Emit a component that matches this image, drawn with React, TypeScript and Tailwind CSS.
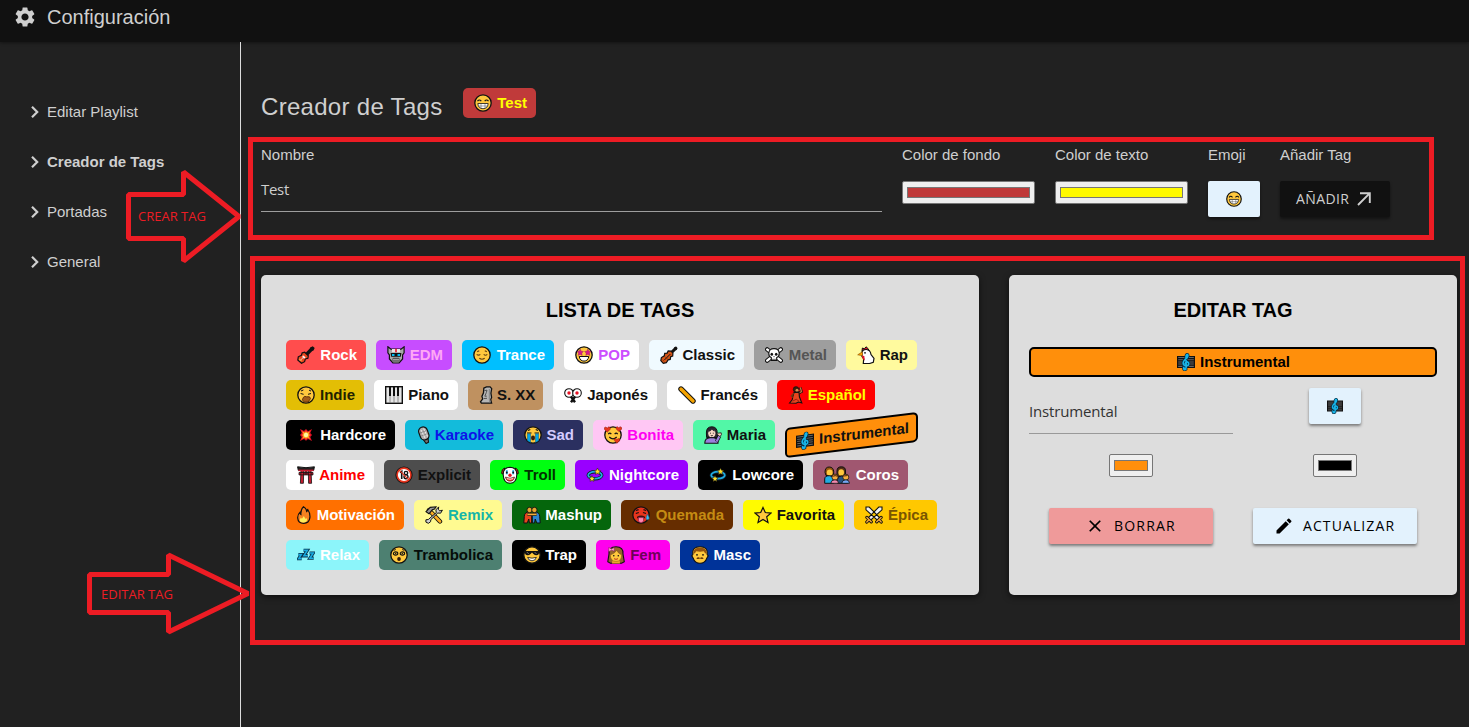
import React from "react";
import { MdSettings, MdClose, MdEdit } from "react-icons/md";

const K = "#111";
const Y = "#ffc83d";

function Face({ color = Y, children }: { color?: string; children?: React.ReactNode }) {
  return (
    <>
      <circle cx="9" cy="9" r="8.2" fill={color} stroke={K} strokeWidth="1.3" />
      {children}
    </>
  );
}

const GLYPHS: Record<string, React.ReactNode> = {
  grin: (
    <Face>
      <path d="M3.5 7.2q1.8-2.4 3.8 0M10.7 7.2q1.8-2.4 3.8 0" fill="none" stroke={K} strokeWidth="1.2" />
      <path d="M3.8 9.5h10.4q-.6 5.2-5.2 5.2T3.8 9.5z" fill="#fff" stroke={K} strokeWidth=".8" />
      <path d="M4.3 12h9.4M7 9.7v4.6M11 9.7v4.6" stroke="#444" strokeWidth=".5" />
    </Face>
  ),
  guitar: (
    <>
      <path d="M9 9L15.2 2.5" stroke={K} strokeWidth="3.4" />
      <path d="M13.3 1.5l2.4-1.3 2 1.8-1.2 2.6-2.2.3-1.6-1.5z" fill={K} />
      <path d="M5.2 6.8l2.5-.6 3.6 3.5-.4 2.6-2.6.7-.7 2.7-3.1 1.6L.8 14l.5-3.2 3.1-1.5z" fill="#e8461e" stroke={K} strokeWidth="1.2" />
      <path d="M6 9.3l2.8 2.6-2 .5L5.3 11z" fill="#fff" />
      <path d="M3 14.7l4.5-4.5" stroke="#ddd" strokeWidth=".9" />
      <path d="M2.3 12.8l2.3 2.3" stroke="#ff9d3b" strokeWidth="1.2" />
    </>
  ),
  robot: (
    <>
      <path d="M.9.8L4 3.2h10L17.1.8v6L15.6 9v4l-3.5 4H5.9l-3.5-4V9L.9 6.8z" fill="#a8a8a8" stroke={K} strokeWidth="1.2" />
      <path d="M5 3h8v3.2H5z" fill="#e8e8e8" />
      <path d="M9 2.8v3.4" stroke="#e81224" strokeWidth="1.6" />
      <path d="M3.6 7h10.8l-.6 3.8H4.2z" fill={K} />
      <path d="M5 8.9h2.5M10.5 8.9H13" stroke="#00bcf2" strokeWidth="2" />
      <path d="M6 12.3h6v2.7H6z" fill="#eee" stroke={K} strokeWidth=".7" />
      <path d="M8 12.3V15M10 12.3V15" stroke={K} strokeWidth=".7" />
    </>
  ),
  relieved: (
    <Face>
      <path d="M3.7 8.3q1.8 1.8 3.6 0M10.7 8.3q1.8 1.8 3.6 0M6.3 12.3q2.7 1.8 5.4 0M4.2 5.8l2-1M13.8 5.8l-2-1" fill="none" stroke="#604010" strokeWidth="1.1" />
    </Face>
  ),
  starstruck: (
    <Face>
      <path d="M5.2 3.2l1 2 2.2.3-1.6 1.6.4 2.3-2-1.1-2 1.1.4-2.3L2 5.5l2.2-.3zM12.8 3.2l1 2 2.2.3-1.6 1.6.4 2.3-2-1.1-2 1.1.4-2.3-1.6-1.6 2.2-.3z" fill="#d8178a" stroke="#8b0b58" strokeWidth=".4" />
      <path d="M4.2 10.5h9.6q-.8 4.6-4.8 4.6t-4.8-4.6z" fill="#fff" stroke={K} strokeWidth="1" />
    </Face>
  ),
  violin: (
    <>
      <path d="M9 9l7.4-7.4" stroke={K} strokeWidth="3" />
      <path d="M13.8 1.7l2.4-1.1 1.3 1.3-1 2.3z" fill={K} />
      <path d="M8.2 4.9l2.8.2 1.9 2-.2 3-2 .7-.5 2.6-2.1.5-1.8 2.8-3 .6L.8 14.6l.6-3 2.9-1.8.4-2.4 2.4-.3z" fill="#d45416" stroke={K} strokeWidth="1.2" />
      <path d="M4.4 14l6-6" stroke={K} strokeWidth="1" />
      <path d="M5 10.6l2.6 2.7M2.7 13.8l1.4 1.5" stroke="#7a2b08" strokeWidth=".8" />
    </>
  ),
  skull: (
    <>
      <path d="M2.2 3.4l13.6 11.2M15.8 3.4L2.2 14.6" stroke={K} strokeWidth="4.4" strokeLinecap="round" />
      <path d="M2.2 3.4l13.6 11.2M15.8 3.4L2.2 14.6" stroke="#fff" strokeWidth="2.4" strokeLinecap="round" />
      <path d="M9 2.6q5.2 0 5.2 5 0 3.2-2.5 4v2.8H6.3v-2.8q-2.5-.8-2.5-4 0-5 5.2-5z" fill="#fff" stroke={K} strokeWidth="1.1" />
      <ellipse cx="6.8" cy="8.2" rx="1.3" ry="1.5" fill={K} />
      <ellipse cx="11.2" cy="8.2" rx="1.3" ry="1.5" fill={K} />
      <path d="M9 10v1.2M8 12.7v1.6M10 12.7v1.6" stroke={K} strokeWidth=".8" />
    </>
  ),
  chicken: (
    <>
      <path d="M5 5l.4-3 2 .8L9 .8l1.9 1.6 1.4 2.4z" fill="#e81224" stroke={K} strokeWidth="1" />
      <path d="M4.8 6.2Q6 3.3 9.4 3.5q3.9.3 4.6 5l3 3.8-.7 4-3.8 1.2H6.3l.4-4.9-1.7-2z" fill="#fff" stroke={K} strokeWidth="1.2" />
      <path d="M5.4 5.8L.7 8.8l4.9 1z" fill="#ffa500" stroke="#8a4b00" strokeWidth=".6" />
      <path d="M5 9.8l2.3.2.5 4.4q-2.6-.6-2.8-4.6z" fill="#e81224" />
      <circle cx="8" cy="6.8" r=".9" fill={K} />
    </>
  ),
  yawn: (
    <Face>
      <path d="M3.6 7.5l3 .8M14 7.5l-3 .8M4 5l2.4-1M12 4.1l2 1" fill="none" stroke={K} strokeWidth="1" />
      <path d="M6.2 11.6q1.5-2 3.4-.8 3.8-.9 3.9 1.8l-2.3 3.4-4 .1-1.8-2.2z" fill="#a35c18" stroke="#5a300a" strokeWidth=".9" />
    </Face>
  ),
  piano: (
    <>
      <rect x=".7" y=".7" width="16.6" height="16.6" fill="#e6e6e6" stroke={K} strokeWidth="1.4" />
      <path d="M5 1v16M9 1v16M13 1v16" stroke="#777" strokeWidth=".8" />
      <path d="M4 1h2v9H4zM8 1h2v9H8zM12 1h2v9h-2z" fill={K} />
    </>
  ),
  moai: (
    <>
      <path d="M4.8 2.2L7.5.8h3.6l1.6 1.8-.8 4.6.7 4.2-.9 2.2.9 3.6H2.4l-.9-1.4 2.2-3-.8-2.4 1.6-3.6z" fill="#b5b5b5" stroke={K} strokeWidth="1.3" />
      <path d="M5.3 4.6l2.7-.4-.6 2.2-1.6 3.8h1.9M4.8 12.5l3.2-.2" fill="none" stroke="#505050" strokeWidth="1" />
      <path d="M10.4 3v9.5l.4 3.6" fill="none" stroke="#8a8a8a" strokeWidth="1.3" />
    </>
  ),
  fans: (
    <>
      <path d="M5.5 8.5l5.5 7.7M12.5 8.5L7 16.2" stroke={K} strokeWidth="2.4" />
      <circle cx="5" cy="7" r="4.3" fill="#fff" stroke={K} strokeWidth="1.1" />
      <circle cx="13" cy="7" r="4.3" fill="#fff" stroke={K} strokeWidth="1.1" />
      <path d="M7.4 3.8L9 5.4l1.6-1.6" fill="none" stroke={K} strokeWidth=".8" />
      <circle cx="5" cy="7" r="1.7" fill="#e81224" />
      <circle cx="13" cy="7" r="1.7" fill="#e81224" />
    </>
  ),
  baguette: (
    <>
      <path d="M3 3l12 12" stroke={K} strokeWidth="5.4" strokeLinecap="round" />
      <path d="M3 3l12 12" stroke="#f5a300" strokeWidth="3.4" strokeLinecap="round" />
    </>
  ),
  dancer: (
    <>
      <path d="M10 7.5l3.5-1.8-1.2-4.2" fill="none" stroke={K} strokeWidth="2.6" />
      <path d="M10 7.5l3.5-1.8-1.2-4.2" fill="none" stroke="#c6763a" strokeWidth="1.3" />
      <circle cx="8" cy="3.4" r="2.8" fill="#3b1e0a" stroke={K} strokeWidth=".6" />
      <circle cx="9" cy="4.2" r="1.5" fill="#d99054" />
      <path d="M6 6.5l5-.3.4 4.6 2.4 6.2-3.4-1-2.4 1.2-6.4-.2 2.6-3.2.6-3.2z" fill="#e8451e" stroke={K} strokeWidth="1.1" />
      <path d="M5.8 7.2L3.2 10l1.6 1.6" fill="none" stroke="#7a3a14" strokeWidth="1.3" />
      <path d="M4.6 15.2l3.6-2 2.8 2" fill="none" stroke="#8c1111" strokeWidth=".8" />
    </>
  ),
  boom: (
    <>
      <path d="M3 3l4 2 2-2 2 2.2L15 3l-1.8 4 1.8 2-1.8 2 1.8 4-4-2-2 1.8L7 13l-4 2 1.8-4L3 9l1.8-2z" fill="#e81224" />
      <path d="M5 5.2l2.8 1.3L9 5l1.3 1.6L13 5.2l-1.2 2.6L13 9l-1.2 1.4L13 13l-2.7-1.3L9 13l-1.2-1.3L5 13l1.3-2.6L5 9l1.3-1.2z" fill="#ffa51f" />
      <circle cx="9" cy="9" r="2.2" fill="#fff59d" />
    </>
  ),
  mic: (
    <>
      <path d="M6.5 12.5l3.6 5 2.4-1.3-.6-5" fill="#777" stroke={K} strokeWidth="1.1" />
      <rect x="3.6" y=".8" width="8.8" height="13.2" rx="4.3" transform="rotate(-20 8 8)" fill="#b0b0b0" stroke={K} strokeWidth="1.2" />
      <path d="M5 4l4 8M7.6 2.6l4 8" stroke="#ececec" strokeWidth="1" />
      <path d="M4 7l6.4-2.4M5.2 10l6.6-2.4" stroke="#777" strokeWidth=".7" />
    </>
  ),
  sob: (
    <Face>
      <path d="M3 7h4.5M10.5 7H15M4 4.5l2.3-1M11.7 3.5l2.3 1" stroke={K} strokeWidth="1.2" />
      <path d="M3.5 7.8h3v8.6l-3-1.7zM11.5 7.8h3v6.9l-3 1.7z" fill="#00a8e8" stroke="#075d94" strokeWidth=".5" />
      <ellipse cx="9" cy="12" rx="2" ry="2.4" fill="#3c1c08" />
    </Face>
  ),
  hearts: (
    <>
      <Face>
        <path d="M4.3 8.2q1.4-2 3 0M10.7 8.2q1.4-2 3 0M5.3 11q3.7 3.6 7.4 0" fill="none" stroke={K} strokeWidth="1.2" />
      </Face>
      <path d="M3.2 6.2L.3 3.2Q0 1 1.8 1l1.4 1L4.8.8q2 .2 1.5 2.5zM14.8 5.5L12 2.7Q11.7.5 13.4.7l1.3 1 1.5-1q2 .2 1.5 2.5zM12.8 17.3l-2.6-3q0-2 1.5-1.8l1.2 1 1.6-1q1.8.2 1.2 2.2z" fill="#e8351e" stroke="#8b1d10" strokeWidth=".5" />
    </>
  ),
  woman: (
    <>
      <path d="M2.4 7Q2.2.8 7.8.8t5.4 6.5l.3 4.2H2.6z" fill="#2b2430" stroke={K} strokeWidth="1" />
      <ellipse cx="7.8" cy="7.2" rx="3.6" ry="3.9" fill="#f7d7c4" />
      <path d="M4.2 6q2.8-.5 3.7-2.4 1.5 2 3.4 2L9.3 2.3H5z" fill="#2b2430" />
      <path d="M.8 17.2q0-5.3 5.2-5.5h3.6q4.4.2 4.4 5.5z" fill="#9a80dd" stroke={K} strokeWidth="1.1" />
      <path d="M12.6 15.6l2.9-5.7" stroke={K} strokeWidth="3.6" />
      <path d="M12.6 15.6l2.9-5.7" stroke="#9a80dd" strokeWidth="2.2" />
      <path d="M12 7.4l5.2-.6.2 2-1.5 1.7z" fill="#f7d7c4" stroke={K} strokeWidth=".8" />
      <path d="M6 7.2h1M8.8 7.2h1M6.8 9.5q1 .7 2 0" stroke={K} strokeWidth=".8" />
    </>
  ),
  score: (
    <>
      <path d="M.6 3.5h16.8v11H.6z" fill="#666" stroke={K} strokeWidth="1.2" />
      <path d="M1 5.6h16M1 7.8h16M1 10h16M1 12.2h16" stroke={K} strokeWidth="1.2" />
      <path d="M8.9 16.2Q6.6 17.4 6.7 15q2.4 1.5 2.5-1L9 4.3Q9 1.4 10.4 1.5q1.2.8-.4 3.3Q5.7 8 6.2 10.5q.5 2.5 4.2 2.1 2-.8 1-3-2-1.7-3.2.8" fill="none" stroke="#052d42" strokeWidth="3.1" strokeLinecap="round" />
      <path d="M8.9 16.2Q6.6 17.4 6.7 15q2.4 1.5 2.5-1L9 4.3Q9 1.4 10.4 1.5q1.2.8-.4 3.3Q5.7 8 6.2 10.5q.5 2.5 4.2 2.1 2-.8 1-3-2-1.7-3.2.8" fill="none" stroke="#19b5e8" strokeWidth="1.6" strokeLinecap="round" />
    </>
  ),
  torii: (
    <>
      <path d="M.6.8q8.4 1.8 16.8 0l-.7 3.5H1.3z" fill="#222" stroke={K} strokeWidth="1" />
      <path d="M2 6.5h14v2.4H2zM4 4h2.7l-.3 13.3h-3zM11.3 4H14l.6 13.3h-3zM8 4h2v4H8z" fill="#c61d30" stroke={K} strokeWidth=".8" />
      <path d="M1.5 3.6h15v1.6h-15z" fill="#c61d30" />
    </>
  ),
  eighteen: (
    <>
      <circle cx="9" cy="9" r="8.6" fill={K} />
      <circle cx="9" cy="9" r="6.9" fill="#fff" stroke="#e8351e" strokeWidth="1.6" />
      <path d="M5 6.6l1.7-1.3v7.6" fill="none" stroke={K} strokeWidth="1.6" />
      <ellipse cx="11" cy="7" rx="1.7" ry="1.6" fill="none" stroke={K} strokeWidth="1.4" />
      <ellipse cx="11" cy="10.8" rx="2" ry="1.9" fill="none" stroke={K} strokeWidth="1.4" />
      <path d="M4.2 4.2l9.6 9.6" stroke="#e8351e" strokeWidth="1.2" />
    </>
  ),
  clown: (
    <>
      <path d="M3.5 2Q.5 3 .7 7.5l2.6 1zM14.5 2q3 1 2.8 5.5l-2.6 1z" fill="#e8351e" stroke={K} strokeWidth="1" />
      <path d="M9 1.3q7 .3 6.8 7.4Q15.5 17 9 17.2 2.5 17 2.2 8.7 2 1.6 9 1.3z" fill="#fff" stroke={K} strokeWidth="1.1" />
      <path d="M5.8 4.2v4M12.2 4.2v4" stroke="#19a7dd" strokeWidth="1.9" />
      <circle cx="5.8" cy="6.5" r=".9" fill={K} />
      <circle cx="12.2" cy="6.5" r=".9" fill={K} />
      <circle cx="9" cy="9.2" r="1.7" fill="#e81224" />
      <path d="M4.4 11q4.6 2.3 9.2 0-.7 4.2-4.6 4.2T4.4 11z" fill="#e8351e" stroke={K} strokeWidth=".5" />
      <path d="M5.8 12.6q3.2 1.3 6.4 0" stroke="#fff" fill="none" strokeWidth=".9" />
    </>
  ),
  dizzy: (
    <>
      <ellipse cx="9" cy="9.2" rx="6.8" ry="3.5" fill="none" stroke="#0b1e28" strokeWidth="3.4" />
      <ellipse cx="9" cy="9.2" rx="6.8" ry="3.5" fill="none" stroke="#20ace2" strokeWidth="1.8" />
      <path d="M11.5 2l1 2.2 2.2.4-1.6 1.6.4 2.2-2-1-2 1 .4-2.2-1.6-1.6 2.2-.4zM6 9.6l.9 2 2.1.3-1.5 1.4.4 2.1-1.9-1-1.9 1 .4-2.1L3 11.9l2.1-.3z" fill="#ffe12b" stroke={K} strokeWidth=".5" />
    </>
  ),
  family: (
    <>
      <path d="M1 6.3Q1 1 5.2 1t4.6 5L9 9.5H2z" fill="#94540e" stroke={K} />
      <ellipse cx="5.7" cy="6.6" rx="2.9" ry="3.2" fill={Y} />
      <path d="M.7 17.3V13q0-3.3 4.6-3.3t4.3 7.6z" fill="#20ace2" stroke={K} />
      <path d="M13 8V5q0-4.2 4.3-4.2T21.5 5v3l-.8 4H13z" fill="#573016" stroke={K} />
      <ellipse cx="17.2" cy="6.4" rx="2.8" ry="3.2" fill={Y} />
      <path d="M13.5 17.3v-4q0-3.3 4-3.3 6 0 6.3 7.3z" fill="#24517f" stroke={K} />
      <circle cx="11" cy="11.2" r="3.1" fill="#f5ac3d" stroke={K} strokeWidth=".8" />
      <path d="M6.8 17.3q.2-3.5 4.2-3.5 3.4 0 3.6 3.5z" fill="#f58bb1" stroke={K} strokeWidth=".8" />
      <circle cx="21.8" cy="11.2" r="3" fill="#f5ac3d" stroke={K} strokeWidth=".8" />
      <path d="M17.8 17.3q.2-3.5 4.2-3.5 3.3 0 3.5 3.5z" fill="#75a8f5" stroke={K} strokeWidth=".8" />
      <path d="M8.4 10.2q2.2.2 2.6-1.4.9 1.4 2.6 1.4M19.4 9.8q2.4.2 4.4-.6" fill="none" stroke="#743f16" strokeWidth="1.3" />
    </>
  ),
  fire: (
    <>
      <path d="M6.5.8q3 1.8 3.2 4.7Q11 4.6 10.5 3q2.8 4 2.4 8.7-.8 5.7-6.2 5.7-5.6 0-6-5.4-.2-3.4 2.2-5.6.1 1.4 1 2Q3.5 3.6 6.5.8z" fill="#f58220" stroke={K} strokeWidth="1.2" />
      <path d="M3.4 15.7q-1.3-2 .5-4.1l1 1.1 2-2.7q.5 1.8 1.9 2.9l.8-1q1.3 2.4-.4 3.8-2.8 1.5-5.8 0z" fill="#ffef5a" />
    </>
  ),
  tools: (
    <>
      <path d="M4 4l11 11.5" stroke={K} strokeWidth="4.4" strokeLinecap="round" />
      <path d="M4 4l11 11.5" stroke="#ffae22" strokeWidth="2.6" strokeLinecap="round" />
      <path d="M1 5.7l4.2-4.3L11 .8 9.5 3 7.3 3.8 4 7.8z" fill="#999" stroke={K} strokeWidth="1.1" />
      <path d="M13.7.9l-2.8 3 .4 2.7-8 6.9-2.4.3v2.3l2.5 1.2 2.2-1.6.2-2 7-6.7 2.8.2 1.8-3-2.6.7-1.5-1.4z" fill="#d0d0d0" stroke={K} strokeWidth="1" />
    </>
  ),
  wrestle: (
    <>
      <path d="M6.5 5.5Q1.2 6.5 1.3 10.5L.8 17h3.4l1.6-4 .6 4h2.2l.2-8z" fill="#e8451e" stroke={K} />
      <path d="M11.5 5.5q5.3 1 5.2 5l.5 6.5h-3.4l-1.6-4-.6 4H9.4l-.2-8z" fill="#2b85d0" stroke={K} />
      <circle cx="6.6" cy="4" r="2.7" fill="#e6a62f" stroke={K} strokeWidth=".9" />
      <circle cx="11.4" cy="4" r="2.7" fill="#e6a62f" stroke={K} strokeWidth=".9" />
      <path d="M4.4 8.4h9.2" stroke={K} strokeWidth="3" />
      <path d="M4.4 8.4h9.2" stroke="#f0ae3a" strokeWidth="1.7" />
    </>
  ),
  hot: (
    <>
      <Face color="#e8351e">
        <path d="M3.8 7.5l3-1M11 6.5l3 1M4 4.5l2.6-.8M11.5 3.7l2.6.8" stroke={K} strokeWidth="1.3" />
        <path d="M5 10.8q4-2.5 8 0v1.5H5z" fill="#3c1010" />
        <path d="M6.5 11.6h5v3.9q-2.5 2.3-5 0z" fill="#ff87b2" stroke="#8b184a" strokeWidth=".6" />
      </Face>
      <path d="M15.4 8.3q2.2 3 1.8 4.4-1.6 2.3-3.2 0 0-1.6 1.4-4.4z" fill="#3cbcf4" stroke="#135c83" strokeWidth=".5" />
    </>
  ),
  star: <path d="M9 1.5l2.3 5 5.6.6-4.2 3.7 1.3 5.6-5-3-5 3 1.3-5.6L1.1 7.1l5.6-.6z" fill="#ffc83d" stroke={K} strokeWidth="1.2" />,
  swords: (
    <>
      <path d="M1 1h3.2l10.5 10.8-2.3 2.4L1 3.8zM17 1h-3.2L3.3 11.8l2.3 2.4L17 3.8z" fill="#f2f2f2" stroke={K} strokeWidth="1.1" />
      <path d="M1.9 11.4l4.4 4.4M16.1 11.4l-4.4 4.4M3.6 14.1l-1.8 1.9M14.4 14.1l1.8 1.9" stroke={K} strokeWidth="3.2" strokeLinecap="round" />
      <path d="M1.9 11.4l4.4 4.4M16.1 11.4l-4.4 4.4M3.6 14.1l-1.8 1.9M14.4 14.1l1.8 1.9" stroke="#f5a83c" strokeWidth="1.4" strokeLinecap="round" />
    </>
  ),
  zzz: (
    <>
      <path d="M1.4 8.6h2.9l-2.6 4h3M6.6 4.4h3.7L6.9 9.8h4M12.6 7h3.6l-3.3 5.2h3.8" fill="none" stroke="#082f46" strokeWidth="3.2" />
      <path d="M1.4 8.6h2.9l-2.6 4h3M6.6 4.4h3.7L6.9 9.8h4M12.6 7h3.6l-3.3 5.2h3.8" fill="none" stroke="#18a9df" strokeWidth="1.6" />
    </>
  ),
  spiral: (
    <Face>
      <ellipse cx="5.6" cy="7.5" rx="2.2" ry="1.6" fill="none" stroke={K} strokeWidth="1.1" />
      <ellipse cx="12.4" cy="7.5" rx="2.2" ry="1.6" fill="none" stroke={K} strokeWidth="1.1" />
      <circle cx="5.7" cy="7.5" r=".7" fill={K} />
      <circle cx="12.3" cy="7.5" r=".7" fill={K} />
      <path d="M3.6 4.4l2.2-.9M12.2 3.5l2.2.9" stroke={K} strokeWidth=".9" />
      <ellipse cx="9" cy="12.9" rx="1.8" ry="2" fill="#331a08" />
    </Face>
  ),
  cool: (
    <Face>
      <path d="M1.6 5h14.8l-.7 3.2q-2.4 2.4-5.3-.2L9 6.4 7.6 8Q4.7 10.6 2.3 8.2z" fill={K} />
      <path d="M3.8 6l2 2M11.6 6l2 2" stroke="#999" strokeWidth=".7" />
      <path d="M4.6 11.4q4.4 1.5 8.8 0-1 3.4-4.4 3.4t-4.4-3.4z" fill="#fff" stroke={K} strokeWidth=".8" />
    </Face>
  ),
  girl: (
    <>
      <path d="M2 8Q1.4.8 9 .8T16 8l1.3 7.7-2.8 1.6h-11L.8 15.7z" fill="#94642e" stroke={K} strokeWidth="1.1" />
      <path d="M5.5 14h7l.5 3.4H5z" fill="#efa52d" />
      <path d="M3.2 9q3.8-1 6.6-4.6 1.4 3.2 4.9 4.6-.3 6.4-5.7 6.4T3.2 9z" fill={Y} stroke="#81500e" strokeWidth=".5" />
      <circle cx="6.8" cy="9.8" r=".8" fill={K} />
      <circle cx="11.3" cy="9.8" r=".8" fill={K} />
      <path d="M7 12.7q2 1.3 4 0" fill="none" stroke="#b22323" strokeWidth=".9" />
      <path d="M1.7 1.5L4.5 3l2.8-1.6v3.9L4.5 4.2 1.7 5.7z" fill="#ff9fce" stroke="#781644" strokeWidth=".5" />
    </>
  ),
  man: (
    <>
      <path d="M1.8 8.6Q.6.8 9 .8q8.4 0 7.2 7.8l1 1.2-1.4 2.3Q14.3 17.2 9 17.2t-6.8-5.1L.8 9.8z" fill={Y} stroke={K} strokeWidth="1.1" />
      <path d="M2.4 8Q1.7 1.5 9 1.5T15.6 8q-2-.8-2.8-2.7-3.6.7-7.6 0Q4.4 7.2 2.4 8z" fill="#94540e" />
      <circle cx="6" cy="8.8" r=".9" fill={K} />
      <circle cx="12" cy="8.8" r=".9" fill={K} />
      <path d="M5.3 12.4q1.8-1.9 3.7-.4 1.9-1.5 3.7.4-2 1-3.7.1-1.7.9-3.7-.1z" fill="#633409" />
    </>
  ),
};

function Emoji({ name }: { name: string }) {
  if (name === "family")
    return (
      <svg viewBox="0 0 26 18" className="h-[18px] w-[26px] shrink-0">
        {GLYPHS[name]}
      </svg>
    );
  return (
    <svg viewBox="0 0 18 18" className="h-[18px] w-[18px] shrink-0">
      {GLYPHS[name]}
    </svg>
  );
}

const TAGS: [string, string, string][] = [
  ["Rock", "guitar", "w-[80px] bg-[#ff4d4d] text-white"],
  ["EDM", "robot", "w-[76px] bg-[#c74dff] text-[#ffa8f5]"],
  ["Trance", "relieved", "w-[92px] bg-[#00bfff] text-white"],
  ["POP", "starstruck", "w-[75px] bg-white text-[#cc4dff]"],
  ["Classic", "violin", "w-[95px] bg-[#f0faff] text-[#111]"],
  ["Metal", "skull", "w-[82px] bg-[#9e9e9e] text-[#555]"],
  ["Rap", "chicken", "w-[71px] bg-[#fffa9e] text-[#111]"],
  ["Indie", "yawn", "w-[78px] bg-[#e3be05] text-[#222200]"],
  ["Piano", "piano", "w-[84px] bg-white text-[#111]"],
  ["S. XX", "moai", "w-[75px] bg-[#bf9160] text-[#111]"],
  ["Japonés", "fans", "w-[104px] bg-white text-[#111]"],
  ["Francés", "baguette", "w-[100px] bg-white text-[#111]"],
  ["Español", "dancer", "w-[98px] bg-[#ff0000] text-[#ffff00]"],
  ["Hardcore", "boom", "w-[109px] bg-black text-white"],
  ["Karaoke", "mic", "w-[98px] bg-[#13bbdb] text-[#0d13e8]"],
  ["Sad", "sob", "w-[70px] bg-[#2b3060] text-[#d4cbff]"],
  ["Bonita", "hearts", "w-[90px] bg-[#ffc7f4] text-[#ff00f2]"],
  ["Maria", "woman", "w-[82px] bg-[#52f7a7] text-[#111]"],
  ["Instrumental", "score", "w-[133px] -skew-y-[7deg] border-2 border-black bg-[#ff8f0b] text-[#111]"],
  ["Anime", "torii", "w-[88px] bg-white text-[#ff0000]"],
  ["Explicit", "eighteen", "w-[96px] bg-[#4d4d4d] text-[#111]"],
  ["Troll", "clown", "w-[75px] bg-[#00ff11] text-[#003300]"],
  ["Nightcore", "dizzy", "w-[113px] bg-[#9900ff] text-white"],
  ["Lowcore", "dizzy", "w-[105px] bg-black text-white"],
  ["Coros", "family", "w-[95px] bg-[#a05770] text-white"],
  ["Motivación", "fire", "w-[118px] bg-[#ff7000] text-white"],
  ["Remix", "tools", "w-[88px] bg-[#fffa91] text-[#14b5a8]"],
  ["Mashup", "wrestle", "w-[99px] bg-[#05660c] text-white"],
  ["Quemada", "hot", "w-[112px] bg-[#662d00] text-[#c58b13]"],
  ["Favorita", "star", "w-[101px] bg-[#fffb00] text-[#111]"],
  ["Épica", "swords", "w-[83px] bg-[#ffc800] text-[#7a5500]"],
  ["Relax", "zzz", "w-[83px] bg-[#8cf5fa] text-white"],
  ["Trambolica", "spiral", "w-[123px] bg-[#4d8071] text-[#050d09]"],
  ["Trap", "cool", "w-[74px] bg-black text-white"],
  ["Fem", "girl", "w-[74px] bg-[#ff00ee] text-[#6e0058]"],
  ["Masc", "man", "w-[80px] bg-[#003399] text-white"],
];

function Tag({ name, emoji, look }: { name: string; emoji: string; look: string }) {
  const pad = name === "Instrumental" ? "pl-[9px] pr-[7px]" : "pl-[11px] pr-[9px]";
  return (
    <div className={`flex h-[30px] items-center justify-between rounded-[5px] text-[15px] leading-[18px] font-bold whitespace-nowrap ${pad} ${look}`}>
      <Emoji name={emoji} />
      <span>{name}</span>
    </div>
  );
}

function ColorBox({ look, fill }: { look: string; fill: string }) {
  return (
    <div className={`h-[23px] rounded-[2px] border border-[#767676] bg-[#efefef] px-1 py-[5px] ${look}`}>
      <div className={`h-full border border-[#777] ${fill}`} />
    </div>
  );
}

const RAISED = "rounded-[2px] shadow-[0_2px_3px_rgba(0,0,0,0.45)]";
const HUMANIST = "font-['Open_Sans','Noto_Sans',sans-serif]";

function EmojiButton({ name }: { name: string }) {
  return (
    <button className={`flex h-9 w-[52px] items-center justify-center bg-[#e3f2fd] ${RAISED}`}>
      <svg viewBox="0 0 18 18" className="h-4 w-4">
        {GLYPHS[name]}
      </svg>
    </button>
  );
}

const MENU = ["Editar Playlist", "Creador de Tags", "Portadas", "General"];

export default function App() {
  return (
    <div className="relative flex h-[727px] w-[1469px] flex-col overflow-hidden bg-[#212121] font-['Liberation_Sans',Arial,sans-serif] text-[15px] leading-[18px] text-[#cfcfcf]">
      <header className="flex h-[42px] shrink-0 items-start bg-[#111] pt-[5px] pl-[13px] shadow-[0_1px_3px_rgba(0,0,0,0.4)]">
        <MdSettings className="h-6 w-6" />
        <span className="ml-[10px] text-[20px] leading-6">Configuración</span>
      </header>

      <div className="flex min-h-0 flex-1">
        <nav className="flex w-[241px] shrink-0 flex-col border-r border-[#ddd] pt-[45px] pl-[30px]">
          {MENU.map((m) => (
            <div key={m} className={`flex h-[50px] items-center ${m === "Creador de Tags" ? "font-bold" : ""}`}>
              <svg viewBox="0 0 10 14" className="h-[14px] w-[10px]" fill="none" stroke="currentColor" strokeWidth="2.2">
                <path d="M2 1.8L7.2 7 2 12.2" />
              </svg>
              <span className="ml-[7px]">{m}</span>
            </div>
          ))}
        </nav>

        <main className="flex flex-1 flex-col pt-[46px] pl-5">
          <div className="flex h-[30px] items-start">
            <h1 className="mt-[5px] w-[202px] text-[24px] leading-7 tracking-[0.3px]">Creador de Tags</h1>
            <Tag name="Test" emoji="grin" look="w-[73px] bg-[#c03a3a] text-[#ffff00]" />
          </div>

          <div className="mt-[28px] flex h-[94px] items-start">
            <div className="mr-5 w-[621px]">
              <div>Nombre</div>
              <div className={`mt-[9px] flex h-[39px] items-center border-b border-[#9e9e9e] pb-[6px] text-[15px] tracking-[-0.3px] ${HUMANIST}`}>Test</div>
            </div>
            <div className="mr-5 w-[133px]">
              <div className="mb-[17px]">Color de fondo</div>
              <ColorBox look="w-[133px]" fill="bg-[#c03a3a]" />
            </div>
            <div className="mr-5 w-[133px]">
              <div className="mb-[17px]">Color de texto</div>
              <ColorBox look="w-[133px]" fill="bg-[#fffa00]" />
            </div>
            <div className="mr-5 w-[52px]">
              <div className="mb-[17px]">Emoji</div>
              <EmojiButton name="grin" />
            </div>
            <div className="w-[110px]">
              <div className="mb-[17px]">Añadir Tag</div>
              <button className={`flex h-9 w-[110px] items-center bg-[#111] pl-4 text-[14px] ${HUMANIST} ${RAISED}`}>
                <span className="w-[61px] text-left tracking-[0.4px]">AÑADIR</span>
                <svg viewBox="0 0 14 14" className="h-[14px] w-[14px]" fill="none" stroke="currentColor" strokeWidth="1.9">
                  <path d="M1 13L12.6 1.4M3 1.3h9.8V11" />
                </svg>
              </button>
            </div>
          </div>

          <div className="mt-[35px] flex gap-[30px] text-black">
            <section className="h-[320px] w-[718px] rounded-[5px] bg-[#ddd] px-[25px] pt-[23px] shadow-[0_2px_6px_rgba(0,0,0,0.6)]">
              <h2 className="text-center text-[20px] leading-6 font-bold">LISTA DE TAGS</h2>
              <div className="mt-[18px] flex flex-wrap gap-[10px]">
                {TAGS.map(([name, emoji, look]) => (
                  <Tag key={name} name={name} emoji={emoji} look={look} />
                ))}
              </div>
            </section>

            <section className="h-[320px] w-[448px] rounded-[5px] bg-[#ddd] px-5 pt-[23px] shadow-[0_2px_6px_rgba(0,0,0,0.6)]">
              <h2 className="text-center text-[20px] leading-6 font-bold">EDITAR TAG</h2>
              <div className="mt-[25px] flex h-[30px] items-center justify-center gap-[5px] rounded-[5px] border-2 border-black bg-[#ff8f0b] pl-px font-bold">
                <Emoji name="score" />
                <span>Instrumental</span>
              </div>
              <div className="mt-[11px] grid grid-cols-2 justify-items-center">
                <div className={`h-[46px] w-[204px] border-b border-[#999] pt-[14px] text-[15px] tracking-[-0.15px] text-[#333] ${HUMANIST}`}>Instrumental</div>
                <EmojiButton name="score" />
                <div className="pt-5">
                  <ColorBox look="w-[44px]" fill="bg-[#ff8f0b]" />
                </div>
                <div className="pt-5">
                  <ColorBox look="w-[44px]" fill="bg-black" />
                </div>
                <button className={`mt-[31px] flex h-9 w-[164px] items-center bg-[#ef9a9a] pl-[36px] text-[14px] ${HUMANIST} ${RAISED}`}>
                  <MdClose className="h-5 w-5" />
                  <span className="ml-[9px] tracking-[1.2px]">BORRAR</span>
                </button>
                <button className={`mt-[31px] flex h-9 w-[164px] items-center bg-[#e3f2fd] pl-[21px] text-[14px] ${HUMANIST} ${RAISED}`}>
                  <MdEdit className="h-5 w-5" />
                  <span className="ml-[9px] tracking-[1.1px]">ACTUALIZAR</span>
                </button>
              </div>
            </section>
          </div>
        </main>
      </div>

      <div className="absolute top-[137px] left-[248px] h-[103px] w-[1186px] border-[5px] border-[#ed1c24]" />
      <div className="absolute top-[256px] left-[250px] h-[389px] w-[1215px] border-[5px] border-[#ed1c24]" />
      <svg className="pointer-events-none absolute inset-0 h-[727px] w-[260px]" viewBox="0 0 260 727" fill="none" stroke="#ed1c24" strokeWidth="5" strokeLinejoin="bevel">
        <path d="M128.5 194.5H183.5V172L239 216.5L183.5 261V238.5H128.5Z" />
        <path d="M89.5 574.5H168.5V555L248 593.5L168.5 632V612.5H89.5Z" />
      </svg>
      <div className={`absolute top-[207px] left-[138px] text-[13px] text-[#ed1c24] ${HUMANIST}`}>CREAR TAG</div>
      <div className={`absolute top-[585px] left-[101px] text-[13px] text-[#ed1c24] ${HUMANIST}`}>EDITAR TAG</div>
    </div>
  );
}
